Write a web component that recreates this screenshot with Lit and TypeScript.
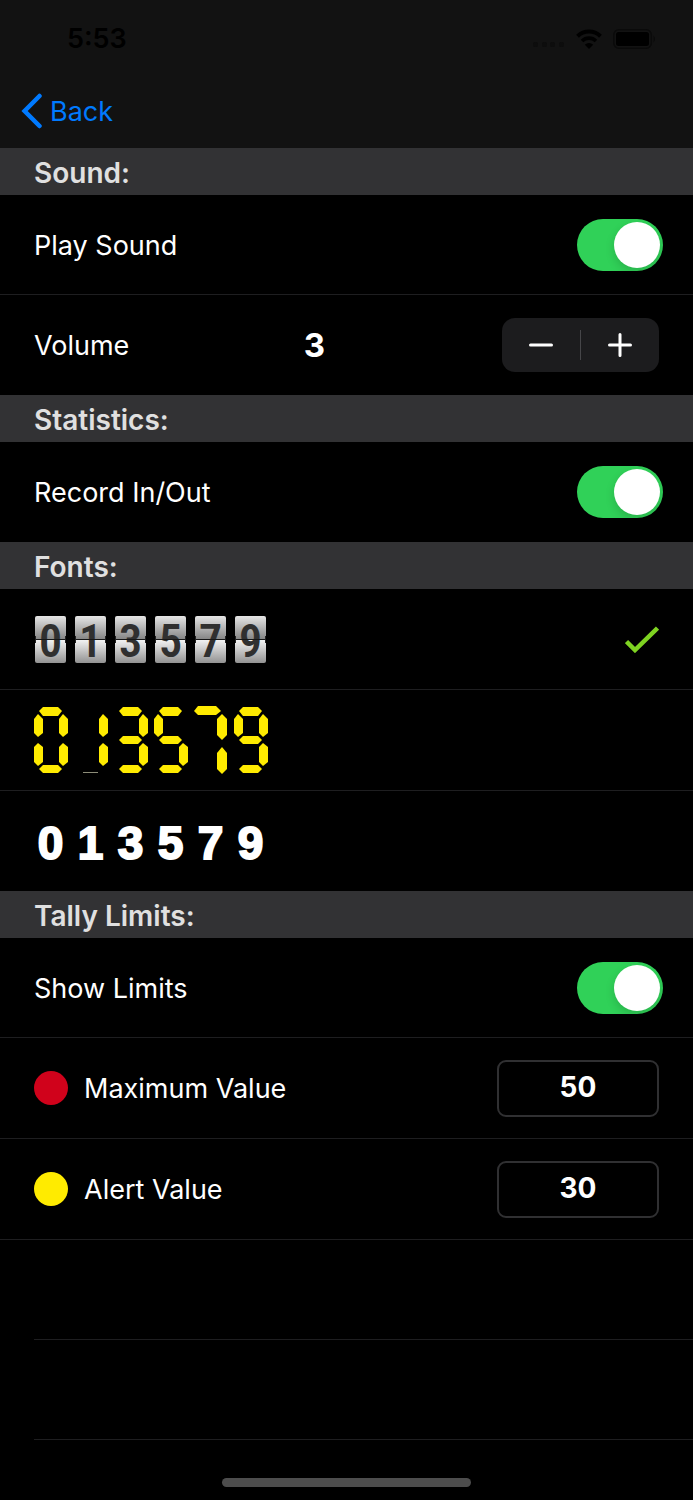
import { LitElement, html, css, svg } from "lit";
import { customElement, property, state } from "lit/decorators.js";

const DIGITS = ["0", "1", "3", "5", "7", "9"];

/* Lit segments of the calculator-style display, named in the usual a–g order. */
const SEGMENT_SHAPES: Record<string, string> = {
  a: "5,4 9,0 24,0 28,4 24,9 9,9",
  b: "25,12 29,7 34,12 34,26 29,30 25,26",
  c: "25,40 29,36 34,40 34,55 29,59 25,55",
  d: "5,62 9,58 24,58 28,62 24,66 9,66",
  e: "0,40 4,36 9,40 9,55 4,59 0,55",
  f: "0,12 4,7 9,12 9,26 4,30 0,26",
  g: "5,33 9,29 24,29 28,33 24,37 9,37",
};
const SEGMENTS: Record<string, string> = {
  "0": "abcdef",
  "1": "bc",
  "3": "abcdg",
  "5": "acdfg",
  "9": "abcdfg",
};

@customElement("lcd-digit")
class LcdDigit extends LitElement {
  @property() value = "0";
  static styles = css`
    :host { display: block; width: 40px; height: 66px; }
    svg { display: block; overflow: visible; }
    polygon { fill: #ffeb00; }
    .mark { fill: #8c8c78; }
  `;
  render() {
    const shapes =
      this.value === "7"
        ? svg`<polygon points="0,4 4,-1 22,-1 27,4 22,8 4,8" />
            <polygon points="23,12 28,7 33,12 33,28 28,33 23,28" />
            <polygon points="23,46 28,40 33,46 33,62 28,67 23,62" />`
        : [...SEGMENTS[this.value]].map((s) => svg`<polygon points=${SEGMENT_SHAPES[s]} />`);
    return html`<svg width="34" height="66" viewBox="0 0 34 66" role="img" aria-label=${this.value}>
      ${shapes}
      ${this.value === "1" ? svg`<rect class="mark" x="9" y="65" width="15" height="1" />` : ""}
    </svg>`;
  }
}

@customElement("app-root")
class AppRoot extends LitElement {
  @state() private volume = 3;

  static styles = css`
    :host {
      display: flex;
      flex-direction: column;
      min-height: 100vh;
      box-sizing: border-box;
      background: #000;
      color: #fff;
      font-family: Inter, "Liberation Sans", sans-serif;
      font-size: 27px;
      line-height: 36px;
    }
    * { box-sizing: border-box; }
    svg { display: block; flex: none; }
    button, input { font: inherit; color: inherit; margin: 0; padding: 0; border: 0; background: none; }
    .top { background: #121212; }
    .status {
      display: flex;
      justify-content: space-between;
      align-items: center;
      height: 76px;
      padding: 2px 37px 0 67px;
      color: #000;
      font-weight: 600;
    }
    .signals { display: flex; align-items: center; gap: 11px; }
    .nav { display: flex; align-items: center; height: 72px; padding: 0 21px 2px; }
    .back { display: flex; align-items: center; gap: 8px; color: #007aff; text-decoration: none; }
    .back span { padding-top: 2px; }
    h2 {
      margin: 0;
      height: 47px;
      padding: 2px 34px 0;
      display: flex;
      align-items: center;
      background: #323234;
      color: #e0e0e0;
      font-size: 28px;
      font-weight: 600;
    }
    .row {
      display: flex;
      align-items: center;
      justify-content: space-between;
      height: 100px;
      padding: 0 34px;
      border-bottom: 1px solid #1e1e20;
    }
    .row label { padding-top: 2px; }
    .row:last-child { border-bottom: 0; }
    .row.open { height: 101px; border-bottom: 1px solid #1e1e20; }
    .fonts .row:not(:last-child) { height: 101px; }
    .row.toggle { padding-right: 30px; }
    .row.volume { display: grid; grid-template-columns: 1fr auto 1fr; }
    .volume output { width: 64px; text-align: center; font-weight: 700; font-size: 33px; margin-right: 64px; }
    .volume .stepper { justify-self: end; }
    .named { display: flex; align-items: center; gap: 16px; }
    .dot { width: 34px; height: 34px; border-radius: 50%; }
    .red { background: #d0021b; }
    .yellow { background: #ffeb00; }

    .switch {
      appearance: none;
      display: flex;
      width: 86px;
      height: 52px;
      padding: 3px;
      border-radius: 26px;
      background: #39393d;
    }
    .switch::before {
      content: "";
      width: 46px;
      height: 46px;
      border-radius: 50%;
      background: #fff;
      box-shadow: 0 4px 10px rgba(0, 0, 0, 0.15);
    }
    .switch:checked { background: #30d158; justify-content: flex-end; }

    .stepper {
      display: flex;
      align-items: center;
      width: 157px;
      height: 54px;
      border-radius: 13px;
      background: #1c1c1e;
    }
    .stepper button { flex: 1; height: 100%; display: grid; place-items: center; }
    .bar { width: 1px; height: 30px; background: #464649; }

    .value {
      width: 162px;
      height: 57px;
      padding-bottom: 2px;
      border: 2px solid #303032;
      border-radius: 9px;
      text-align: center;
      font-size: 28px;
      font-weight: 700;
    }

    .choice {
      appearance: none;
      width: 0;
      height: 0;
      margin-left: auto;
    }
    .tick { visibility: hidden; }
    .choice:checked + .tick { visibility: visible; }
    .digits { display: flex; }
    .flip { gap: 9px; padding-left: 1px; }
    .tile {
      position: relative;
      display: grid;
      place-items: center;
      width: 31px;
      height: 47px;
      border-radius: 2px;
      background: linear-gradient(#e6e6e6 0, #868686 23px, #161616 23px, #161616 24px, #f2f2f2 24px, #929292 47px);
      color: #303030;
      font: 600 46px/50px "Roboto Condensed", "Liberation Sans Narrow", Roboto, sans-serif;
    }
    .tile::after {
      content: "";
      position: absolute;
      inset: 20px 0 auto;
      height: 7px;
      border: solid #202020;
      border-width: 0 1px;
      background: linear-gradient(#161616, #161616) 0 3px / 100% 1px no-repeat;
    }
    .black span {
      width: 40px;
      padding-right: 7px;
      display: flex;
      justify-content: center;
      font: 700 46px/56px "Liberation Sans", Arial, sans-serif;
      -webkit-text-stroke: 2px #fff;
    }
    .black { padding-top: 4px; }

    .blank { height: 100px; margin-left: 34px; border-bottom: 1px solid #1e1e20; }
    .home { flex: 1; display: flex; align-items: flex-end; justify-content: center; padding-bottom: 13px; }
    .home div { width: 36%; height: 9px; border-radius: 5px; background: #4d4d4d; }
  `;

  private toggle(id: string, label: string) {
    return html`<div class="row toggle">
      <label for=${id}>${label}</label>
      <input class="switch" id=${id} type="checkbox" checked />
    </div>`;
  }

  private limit(id: string, label: string, colour: string, value: string) {
    return html`<div class="row open">
      <div class="named">
        <span class="dot ${colour}"></span>
        <label for=${id}>${label}</label>
      </div>
      <input class="value" id=${id} type="text" inputmode="numeric" value=${value} />
    </div>`;
  }

  private face(name: string, digits: unknown, checked = false) {
    return html`<label class="row">
      ${digits}
      <input class="choice" type="radio" name="face" aria-label=${name} ?checked=${checked} />
      <svg class="tick" width="34" height="28" viewBox="0 0 34 28">
        <path d="M1.500 16.500 10 25 32.500 3" fill="none" stroke="#7ed321" stroke-width="4.500" />
      </svg>
    </label>`;
  }

  render() {
    return html`
      <header class="top">
        <div class="status">
          <span>5:53</span>
          <div class="signals">
            <svg width="32" height="20" viewBox="0 0 32 20" fill="#0d0d0d">
              <rect x="0" y="13" width="5" height="5" rx="1.500" />
              <rect x="9" y="13" width="5" height="5" rx="1.500" />
              <rect x="17" y="13" width="5" height="5" rx="1.500" />
              <rect x="26" y="13" width="5" height="5" rx="1.500" />
            </svg>
            <svg width="26" height="20" viewBox="0 0 26 20" fill="none" stroke="#000">
              <path d="M1.500 7.200A16.500 16.500 0 0 1 24.500 7.200" stroke-width="4" />
              <path d="M6 12A10 10 0 0 1 20 12" stroke-width="3.600" />
              <path d="M13 20 8.800 15.700A6 6 0 0 1 17.200 15.700Z" fill="#000" stroke="none" />
            </svg>
            <svg width="43" height="20" viewBox="0 0 43 20">
              <rect x="0.800" y="0.800" width="37.500" height="18.400" rx="5" fill="none" stroke="#0a0a0a" stroke-width="1.600" />
              <rect x="3" y="3" width="33" height="14" rx="2.500" />
              <path d="M40.500 6.500q3 3.500 0 7Z" fill="#0a0a0a" />
            </svg>
          </div>
        </div>
        <nav class="nav">
          <a class="back" href="#">
            <svg width="21" height="36" viewBox="0 0 21 36" fill="none" stroke="#007aff" stroke-width="4.500" stroke-linecap="round" stroke-linejoin="miter">
              <path d="M18.500 3 3.600 18 18.500 33" />
            </svg>
            <span>Back</span>
          </a>
        </nav>
      </header>

      <section>
        <h2>Sound:</h2>
        ${this.toggle("play", "Play Sound")}
        <div class="row volume">
          <label for="volume">Volume</label>
          <output id="volume">${this.volume}</output>
          <div class="stepper">
            <button aria-label="Decrease volume" @click=${() => this.volume--}>
              <svg width="24" height="24" viewBox="0 0 24 24" stroke="#fff" stroke-width="3" stroke-linecap="round"><path d="M1.500 12h21" /></svg>
            </button>
            <span class="bar"></span>
            <button aria-label="Increase volume" @click=${() => this.volume++}>
              <svg width="24" height="24" viewBox="0 0 24 24" stroke="#fff" stroke-width="3" stroke-linecap="round"><path d="M1.500 12h21M12 1.500v21" /></svg>
            </button>
          </div>
        </div>
      </section>

      <section>
        <h2>Statistics:</h2>
        ${this.toggle("record", "Record In/Out")}
      </section>

      <section class="fonts">
        <h2>Fonts:</h2>
        ${this.face("Flip", html`<div class="digits flip">${DIGITS.map((d) => html`<span class="tile">${d}</span>`)}</div>`, true)}
        ${this.face("LCD", html`<div class="digits">${DIGITS.map((d) => html`<lcd-digit value=${d}></lcd-digit>`)}</div>`)}
        ${this.face("Black", html`<div class="digits black">${DIGITS.map((d) => html`<span>${d}</span>`)}</div>`)}
      </section>

      <section>
        <h2>Tally Limits:</h2>
        ${this.toggle("limits", "Show Limits")}
        ${this.limit("maximum", "Maximum Value", "red", "50")}
        ${this.limit("alert", "Alert Value", "yellow", "30")}
      </section>
      <div class="blank"></div>
      <div class="blank"></div>
      <div class="home"><div></div></div>
    `;
  }
}
